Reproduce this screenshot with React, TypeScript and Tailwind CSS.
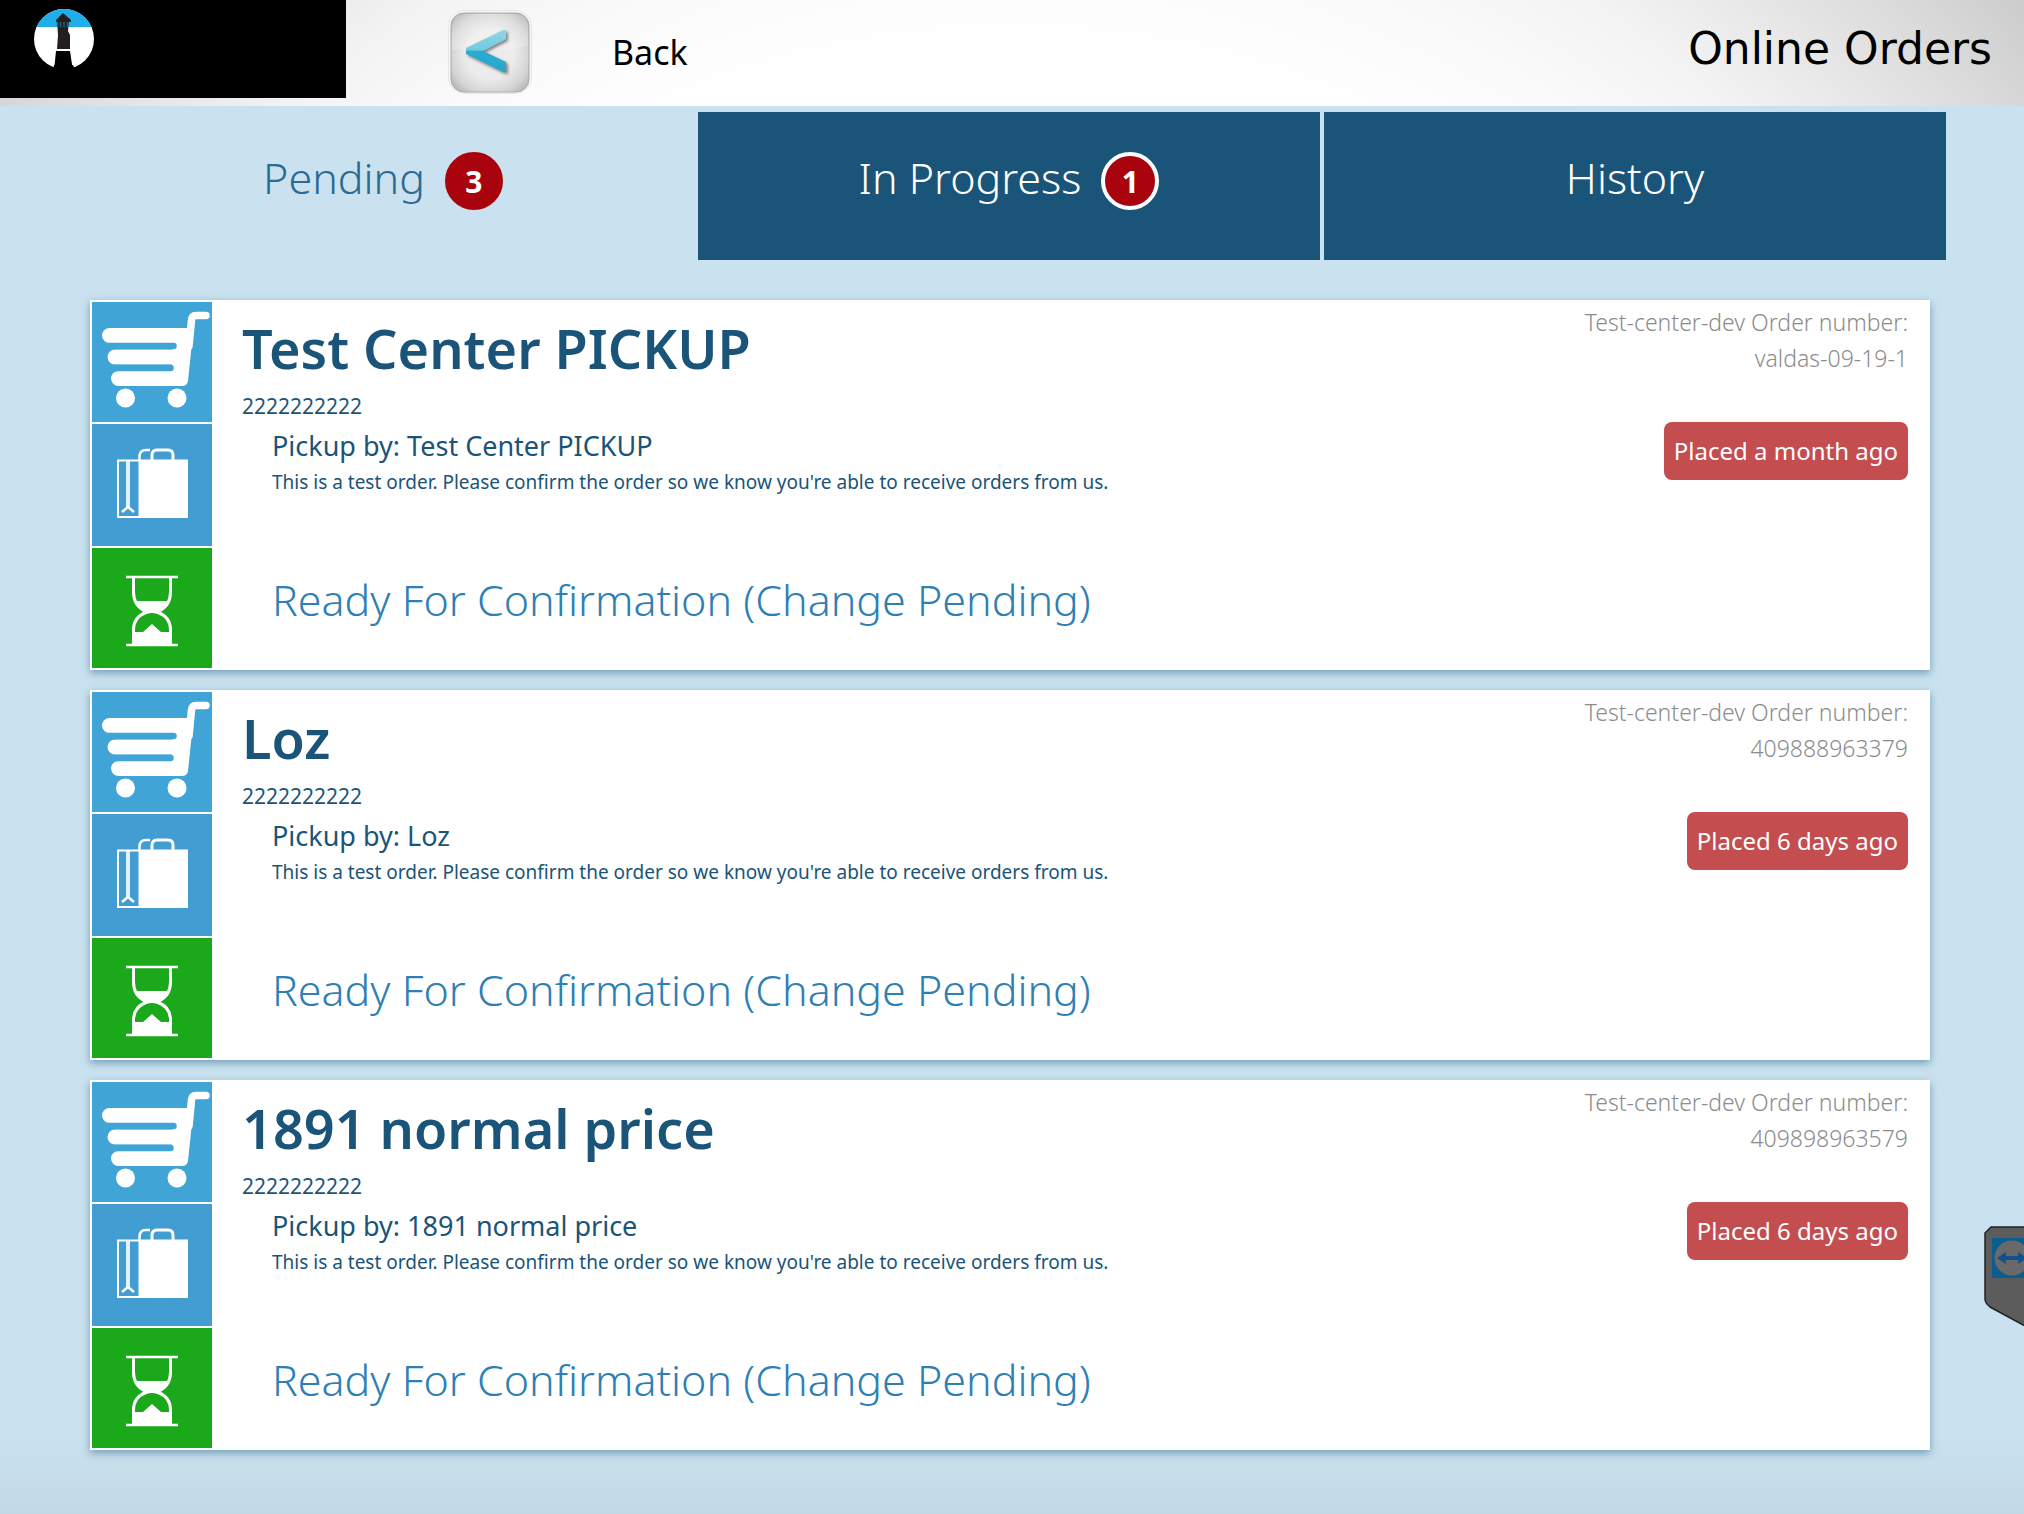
import { useState } from 'react';
import clsx from 'clsx';

const tabs = [
  { id: 'pending', label: 'Pending', count: 3 },
  { id: 'progress', label: 'In Progress', count: 1 },
  { id: 'history', label: 'History', count: 0 },
];

const orders = [
  { customer: 'Test Center PICKUP', phone: '2222222222', number: 'valdas-09-19-1', placed: 'Placed a month ago' },
  { customer: 'Loz', phone: '2222222222', number: '409888963379', placed: 'Placed 6 days ago' },
  { customer: '1891 normal price', phone: '2222222222', number: '409898963579', placed: 'Placed 6 days ago' },
];

type Order = (typeof orders)[number];

function LighthouseLogo() {
  return (
    <svg viewBox="0 0 60 60" className="size-15" aria-hidden="true">
      <defs>
        <clipPath id="logo-clip">
          <circle cx="30" cy="30" r="30" />
        </clipPath>
      </defs>
      <g clipPath="url(#logo-clip)">
        <rect width="60" height="60" fill="#fff" />
        <rect width="60" height="18" fill="#1eaeec" />
        <path d="M20 62 L22 42 H36 L39 62 Z" fill="#000" />
        <path d="M23 40 L24 26 L23 12 H35 L34 22 L36 26 V40 Z" fill="#231f20" />
        <path d="M29 4 L37 11 V13 H22 V11 Z" fill="#231f20" />
        <path d="M23.500 13 V18 M26.500 13 V18 M30 13 V18 M33.500 13 V18" stroke="#17678a" strokeWidth="1.500" />
        <path d="M20 41 H38" stroke="#fff" strokeWidth="2" />
      </g>
      <path d="M20 56 L19 61 H41 L39 56 Z" fill="#000" />
    </svg>
  );
}

function BackIcon() {
  return (
    <svg viewBox="0 0 84 84" className="size-21" aria-hidden="true">
      <defs>
        <radialGradient id="back-face" cx="50%" cy="52%" r="68%">
          <stop offset="0.450" stopColor="#ececec" />
          <stop offset="0.750" stopColor="#d4d4d4" />
          <stop offset="1" stopColor="#a8a8a8" />
        </radialGradient>
        <linearGradient id="back-arrow" x1="0" y1="20" x2="0" y2="62" gradientUnits="userSpaceOnUse">
          <stop offset="0" stopColor="#8fd6e8" />
          <stop offset="0.480" stopColor="#74c9e0" />
          <stop offset="0.500" stopColor="#2cabd0" />
          <stop offset="1" stopColor="#28a6cc" />
        </linearGradient>
        <filter id="back-shadow" x="-20%" y="-20%" width="150%" height="150%">
          <feDropShadow dx="2" dy="2" stdDeviation="1.500" floodColor="#555" floodOpacity="0.700" />
        </filter>
      </defs>
      <rect x="0.500" y="0.500" width="83" height="83" rx="16" fill="#f7f7f7" stroke="#e6e6e6" />
      <rect x="3" y="3" width="78" height="79" rx="13" fill="url(#back-face)" stroke="#a9a9a9" />
      <path d="M4 39 Q42 44 80 36 V17 Q80 4 67 4 H17 Q4 4 4 17 Z" fill="#fff" opacity="0.220" />
      <path d="M58 20 V29 L35 41 L58 52 V62 H55 L18 44 V38 L55 20 Z" fill="url(#back-arrow)" filter="url(#back-shadow)" />
    </svg>
  );
}

function CartIcon() {
  return (
    <svg viewBox="0 0 120 120" className="size-30" aria-hidden="true">
      <g fill="none" stroke="#fff" strokeLinecap="round" strokeLinejoin="round">
        <path d="M17.500 33.500 H92" strokeWidth="15" />
        <path d="M23 55 H90" strokeWidth="15" />
        <path d="M26.500 76.500 H86" strokeWidth="15" />
        <path d="M114 13.500 H104 Q100 13.500 99.500 18 L97 44" strokeWidth="7.500" />
      </g>
      <path d="M80 26 H101.500 L96 79 Q95 84 90 84 H80 Z" fill="#fff" />
      <path d="M17 44 H81.500 M22 66 H78.500" stroke="#41a4d6" strokeWidth="6.500" strokeLinecap="round" />
      <circle cx="33.500" cy="96" r="9.500" fill="#fff" />
      <circle cx="85" cy="96" r="9.500" fill="#fff" />
    </svg>
  );
}

function BagIcon() {
  return (
    <svg viewBox="0 0 120 122" className="h-[122px] w-30" aria-hidden="true">
      <rect x="26" y="36.500" width="69" height="56.500" fill="none" stroke="#fff" strokeWidth="2" />
      <rect x="46.500" y="36" width="49" height="58" fill="#fff" />
      <g fill="none" stroke="#fff" strokeWidth="3">
        <path d="M60 37 V31 Q60 26 65 26 H76 Q81 26 81 31 V37" />
        <path d="M47.500 37 V32 Q48 26 54 26 H58" strokeWidth="2.500" />
      </g>
      <path d="M36 37 V83" stroke="#fff" strokeWidth="4" opacity="0.850" />
      <path d="M30 88 L36 83 L42 88" fill="none" stroke="#fff" strokeWidth="2.500" />
    </svg>
  );
}

function HourglassIcon() {
  return (
    <svg viewBox="0 0 120 120" className="size-30" aria-hidden="true">
      <path d="M34 29 H86 M34 97 H86" stroke="#fff" strokeWidth="2.500" />
      <path
        d="M41.500 29 V44 Q41.500 58 54 63.500 H66 Q78.500 58 78.500 44 V29 M41.500 97 V82 Q41.500 69 54 64.500 Q60 62.500 66 64.500 Q78.500 69 78.500 82 V97"
        fill="none"
        stroke="#fff"
        strokeWidth="3"
      />
      <path d="M44 53 H76 Q72 60 66 64 H54 Q48 60 44 53 Z" fill="#fff" />
      <path d="M41 97 V84 H51 L60 76 L69 84 H79 V97 Z" fill="#fff" />
    </svg>
  );
}

function RemoteHandle() {
  return (
    <svg viewBox="0 0 40 100" className="absolute top-[1226px] right-0 h-25 w-10" aria-hidden="true">
      <path d="M41 1 H7 L1 7 V73 Q1 77 6 81 L41 100 Z" fill="#5c5c5c" stroke="#222" strokeWidth="1.500" />
      <rect x="8" y="12" width="34" height="40" fill="#0b5c8f" />
      <circle cx="28" cy="32" r="17.500" fill="#696969" />
      <path d="M13 32 L22 26 V30 H34 V26 L43 32 L34 38 V34 H22 V38 Z" fill="#15508e" />
    </svg>
  );
}

function OrderCard({ order }: { order: Order }) {
  return (
    <article className="flex bg-white p-0.5 shadow-[0_3px_8px_rgba(40,100,140,0.55)]">
      <div className="flex shrink-0 flex-col gap-0.5">
        <div className="bg-[#41a4d6]">
          <CartIcon />
        </div>
        <div className="bg-[#429dd3]">
          <BagIcon />
        </div>
        <div className="bg-[#1ba81b]">
          <HourglassIcon />
        </div>
      </div>

      <div className="flex flex-1 flex-col pl-[30px] text-[#1a5478]">
        <h2 className="pt-1.5 pb-0.5 text-[54px] leading-[80px] font-semibold">{order.customer}</h2>
        <p className="text-[21px] leading-8">{order.phone}</p>
        <div className="pl-[30px]">
          <p className="text-[27px] leading-[48px]">Pickup by: {order.customer}</p>
          <p className="text-[19px] leading-6">
            This is a test order. Please confirm the order so we know you're able to receive orders from us.
          </p>
          <p className="pt-[76px] text-[43px] leading-[60px] font-[350] text-[#2e7fb4]">
            Ready For Confirmation (Change Pending)
          </p>
        </div>
      </div>

      <div className="flex flex-col items-end pr-5 text-right">
        <p className="pt-0.5 text-[23px] leading-9 font-[350] text-[#8c8c8c]">
          Test-center-dev Order number:
          <br />
          {order.number}
        </p>
        <span className="mt-[46px] rounded-lg bg-[#c44d4f] px-2.5 text-[24px] leading-[58px] text-white">
          {order.placed}
        </span>
      </div>
    </article>
  );
}

export default function App() {
  const [activeTab, setActiveTab] = useState('pending');

  return (
    <div className="relative min-h-screen bg-[#cae2ef] bg-linear-to-b from-[#cae2ef] from-95% to-[#c3d8e6] font-['Noto_Sans',sans-serif]">
      <header className="flex h-[106px] items-start bg-[radial-gradient(circle_at_50%_900px,#ffffff_850px,#fafafa_970px,#f3f3f3_1070px,#e9e9e9_1150px,#d9d9d9_1270px,#cccccc_1354px)]">
        <div className="h-[98px] w-[346px] bg-black pt-[9px] pl-[34px]">
          <LighthouseLogo />
        </div>
        <button className="ml-[102px] flex h-[106px] items-center gap-20 pb-0.5 text-[34px] text-black">
          <BackIcon />
          Back
        </button>
        <h1 className="ml-auto pr-8 font-['DejaVu_Sans',sans-serif] text-[44px] leading-[98px] text-black">Online Orders</h1>
      </header>

      <nav className="grid grid-cols-3 gap-1 pt-1.5 pr-[78px] pl-[72px]">
        {tabs.map((tab) => (
          <button
            key={tab.id}
            onClick={() => setActiveTab(tab.id)}
            className={clsx(
              'flex h-[148px] items-center justify-center gap-5 pb-2.5 text-[43px] font-[350]',
              activeTab === tab.id ? 'text-[#2b6a93]' : 'bg-[#1a5478] text-white'
            )}
          >
            <span className="pb-1.5">{tab.label}</span>
            {tab.count > 0 && (
              <span
                className={clsx(
                  'flex size-[58px] items-center justify-center rounded-full border-4 bg-[#a9040d] text-[30px] font-bold text-white',
                  activeTab === tab.id ? 'border-[#a9040d]' : 'border-white'
                )}
              >
                {tab.count}
              </span>
            )}
          </button>
        ))}
      </nav>

      <main className="flex flex-col gap-5 pt-10 pr-[94px] pb-16 pl-[90px]">
        {orders.map((order) => (
          <OrderCard key={order.number} order={order} />
        ))}
      </main>

      <RemoteHandle />
    </div>
  );
}
